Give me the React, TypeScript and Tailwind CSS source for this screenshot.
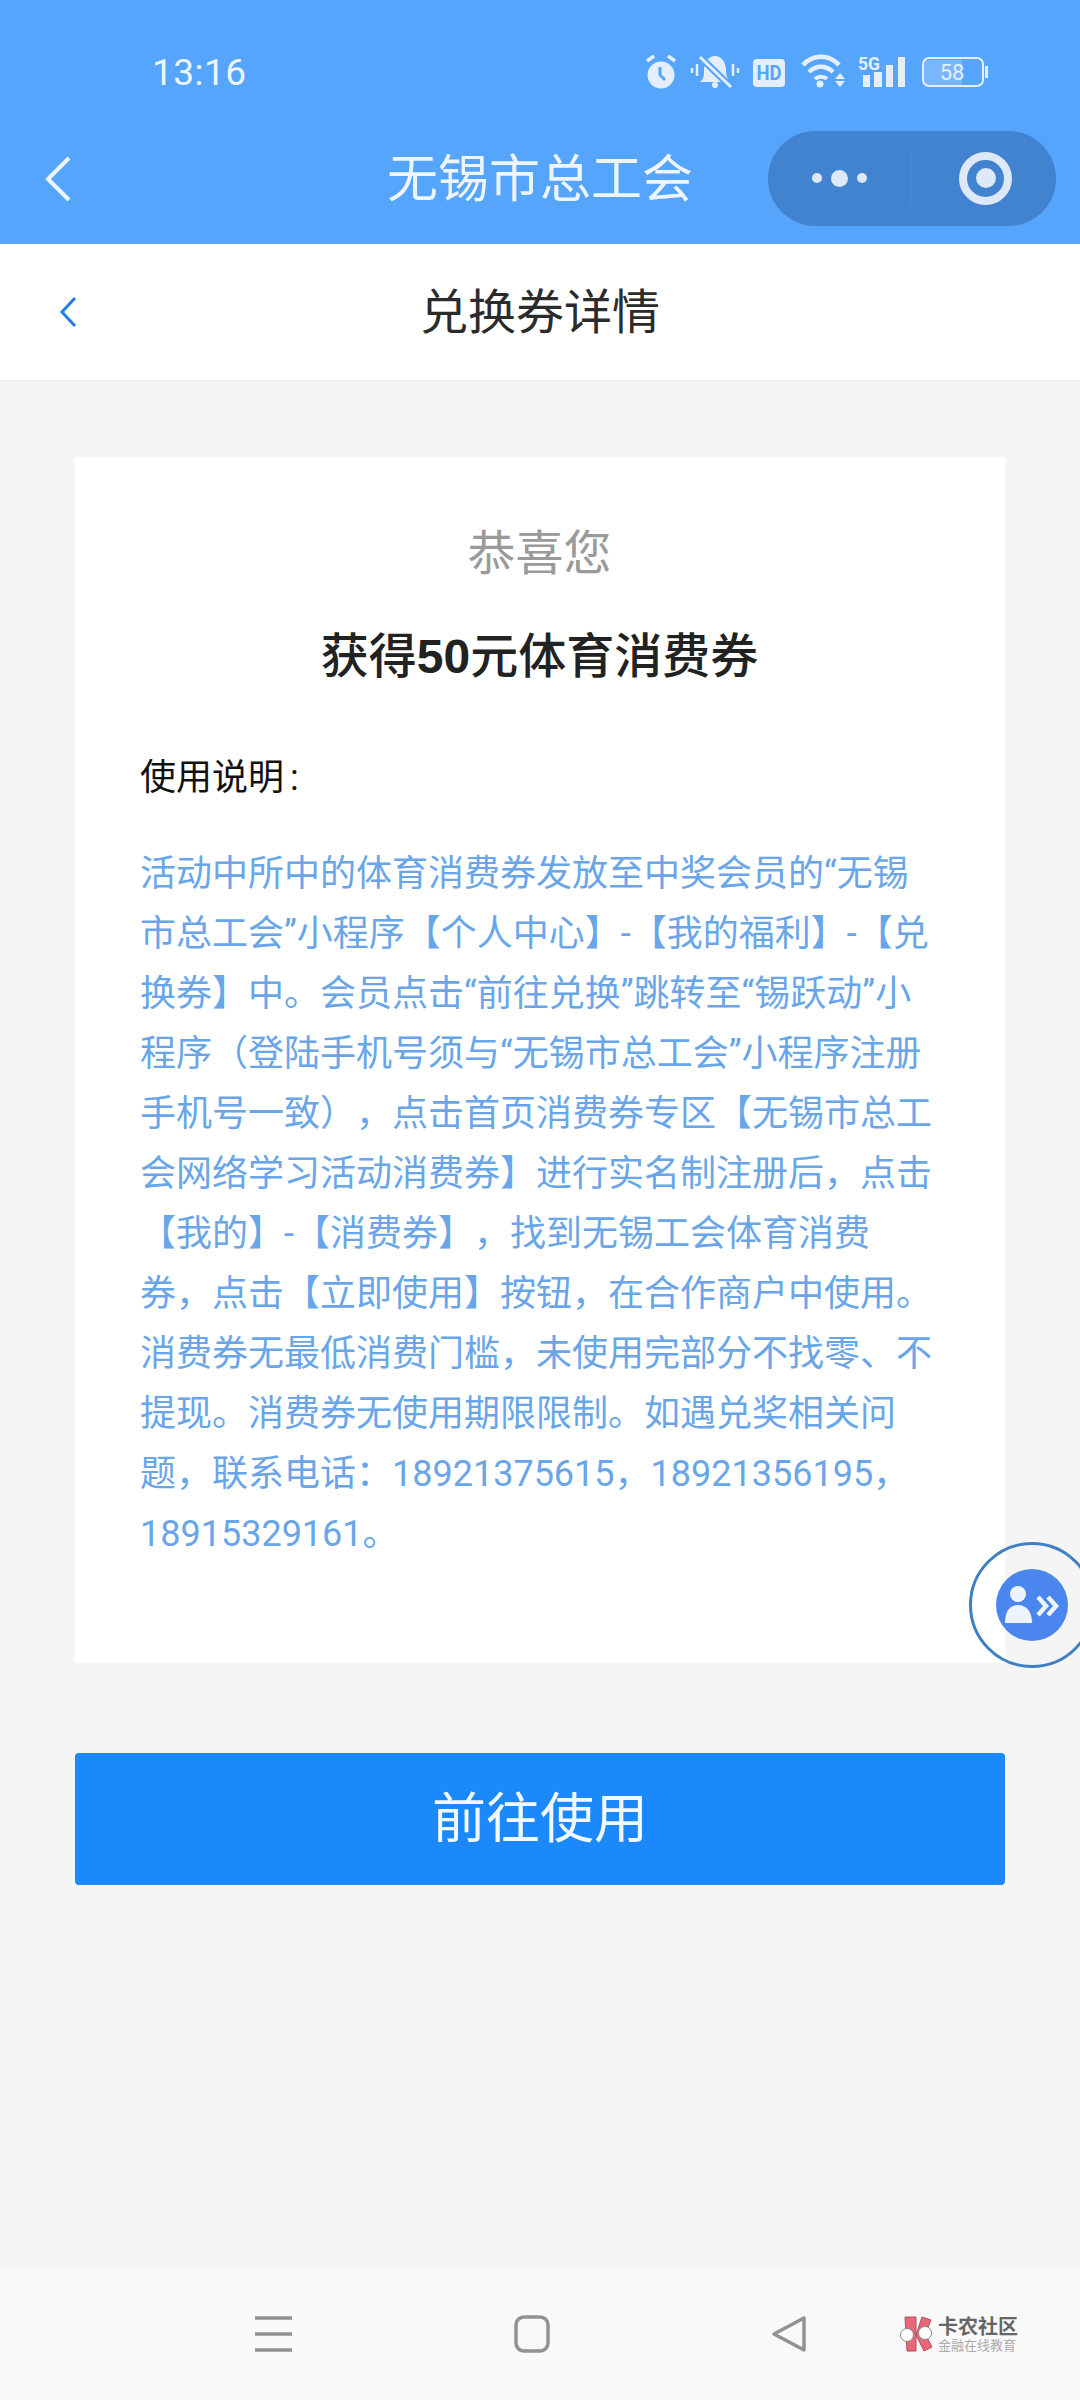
import React from "react";

const FONT = 'Roboto, "Noto Sans CJK SC", sans-serif';

const lines = [
  "活动中所中的体育消费券发放至中奖会员的“无锡",
  "市总工会”小程序【个人中心】-【我的福利】-【兑",
  "换券】中。会员点击“前往兑换”跳转至“锡跃动”小",
  "程序（登陆手机号须与“无锡市总工会”小程序注册",
  "手机号一致），点击首页消费券专区【无锡市总工",
  "会网络学习活动消费券】进行实名制注册后，点击",
  "【我的】-【消费券】，找到无锡工会体育消费",
  "券，点击【立即使用】按钮，在合作商户中使用。",
  "消费券无最低消费门槛，未使用完部分不找零、不",
  "提现。消费券无使用期限限制。如遇兑奖相关问",
  "题，联系电话：18921375615，18921356195，",
  "18915329161。",
];

function StatusIcons() {
  return (
    <svg width="345" height="40" viewBox="0 0 345 40" fill="none" className="block">
      {/* alarm */}
      <circle cx="16" cy="23" r="13.5" fill="#e4effb" />
      <path d="M15 15v8l5 5" stroke="#55a5fd" strokeWidth="3" fill="none" />
      <path d="M2 9l7-5M30 9l-7-5" stroke="#e4effb" strokeWidth="3.5" />
      {/* muted bell */}
      <path d="M55 30c4-3 4-7 4-12 0-8 5-14 11-14s11 6 11 14c0 5 1 9 4 12z" fill="#e4effb" />
      <circle cx="70" cy="33" r="3" fill="#e4effb" />
      <path d="M55 5l31 30" stroke="#55a5fd" strokeWidth="7" />
      <path d="M55 5l31 30" stroke="#e4effb" strokeWidth="3" />
      <path d="M47 16v5M52 12v12M88 12v12M93 16v5" stroke="#e4effb" strokeWidth="2.5" />
      {/* HD */}
      <rect x="108" y="7" width="32" height="28" rx="4" fill="#e4effb" />
      <text x="124" y="28" textAnchor="middle" fontFamily="Roboto, sans-serif" fontWeight="700" fontSize="20" fill="#55a5fd" textLength="25" lengthAdjust="spacingAndGlyphs">HD</text>
      {/* wifi */}
      <path d="M158 13c10-11 26-11 36 0" stroke="#e4effb" strokeWidth="4.5" fill="none" />
      <path d="M164 20c7-7 17-7 24 0" stroke="#e4effb" strokeWidth="4.5" fill="none" />
      <path d="M170 27c3-3 9-3 12 0" stroke="#e4effb" strokeWidth="4" fill="none" />
      <circle cx="175" cy="32" r="3.5" fill="#e4effb" />
      <path d="M190 27l5-6 5 6zM190 29h10l-5 6z" fill="#e4effb" />
      {/* 5G */}
      <text x="213" y="18" fontFamily="Roboto, sans-serif" fontWeight="700" fontSize="19" fill="#e4effb" textLength="22" lengthAdjust="spacingAndGlyphs">5G</text>
      <rect x="218" y="23" width="7" height="12" fill="#e4effb" />
      <rect x="229" y="20" width="8" height="15" fill="#e4effb" />
      <rect x="241" y="13" width="7" height="22" fill="#e4effb" />
      <rect x="253" y="5" width="7" height="30" fill="#e4effb" />
      {/* battery */}
      <path d="M281 8h36v25h-36a3 3 0 0 1-3-3v-19a3 3 0 0 1 3-3z" fill="#7ab6fb" />
      <rect x="278" y="6" width="60" height="28" rx="6" stroke="#e4effb" strokeWidth="2" fill="none" />
      <rect x="340" y="14" width="3" height="12" fill="#e4effb" />
      <text x="307" y="28" textAnchor="middle" fontFamily="Roboto, sans-serif" fontSize="22" fill="#e4effb">58</text>
    </svg>
  );
}

function Logo() {
  return (
    <div className="flex items-center gap-[5px]">
      <svg width="34" height="36" viewBox="0 0 34 36" fill="none">
        <path d="M6 1h11v34H8zM23 1l9 3-6 14 7 13-8 4-8-16z" fill="#e8687a" stroke="#a8505c" strokeWidth="1" />
        <circle cx="8" cy="19" r="6.5" fill="#fff" stroke="#888" strokeWidth="1" />
        <circle cx="26" cy="17" r="6.5" fill="#fff" stroke="#888" strokeWidth="1" />
      </svg>
      <div className="flex flex-col items-start" style={{ fontFamily: FONT }}>
        <span className="text-[20px] leading-[22px] font-bold text-[#666]">卡农社区</span>
        <span className="text-[13px] leading-[15px] text-[#aaa]">金融在线教育</span>
      </div>
    </div>
  );
}

export default function App() {
  return (
    <div className="w-[1080px] h-[2400px] flex flex-col bg-[#f5f5f5] relative overflow-hidden [text-spacing-trim:space-all]" style={{ fontFamily: FONT }}>
      {/* Blue top */}
      <div className="h-[244px] shrink-0 bg-[#55a5fd] flex flex-col">
        <div className="h-[130px] flex items-center justify-between pl-[152px] pr-[90px] pt-[14px]">
          <span className="text-[37px] text-[#eef5fe] leading-none tracking-[0.5px]">13:16</span>
          <StatusIcons />
        </div>
        <div className="flex-1 flex items-center justify-between pl-[44px] pr-[24px] relative">
          <svg width="28" height="48" viewBox="0 0 28 48" fill="none" className="mb-[16px]">
            <path d="M25 3L4 24l21 21" stroke="#eef5fe" strokeWidth="4" />
          </svg>
          <span className="absolute left-0 right-0 top-[15px] text-center text-[51px] leading-[70px] text-[#eef5fe]">无锡市总工会</span>
          <div className="w-[288px] h-[95px] mb-[18px] rounded-[48px] bg-[#4283d0] flex items-center">
            <div className="w-[142px] flex justify-center items-center gap-[9px]">
              <span className="w-[10px] h-[10px] rounded-full bg-[#dde8f8]" />
              <span className="w-[17px] h-[17px] rounded-full bg-[#dde8f8]" />
              <span className="w-[10px] h-[10px] rounded-full bg-[#dde8f8]" />
            </div>
            <div className="w-px h-[56px] bg-[#4d8dd8]" />
            <div className="flex-1 flex justify-center pl-[4px]">
              <div className="w-[53px] h-[53px] rounded-full border-[8px] border-[#dde8f8] flex items-center justify-center">
                <span className="w-[20px] h-[20px] rounded-full bg-[#dde8f8]" />
              </div>
            </div>
          </div>
        </div>
      </div>

      {/* White header */}
      <div className="h-[137px] shrink-0 bg-white border-b border-[#ececec] flex items-center relative pl-[58px]">
        <svg width="20" height="32" viewBox="0 0 20 32" fill="none">
          <path d="M17 2L4 16l13 14" stroke="#1f7fe0" strokeWidth="3" />
        </svg>
        <span className="absolute left-0 right-0 top-[37px] text-center text-[48px] leading-[64px] text-[#2b2b2b]">兑换券详情</span>
      </div>

      {/* Main */}
      <div className="flex-1 px-[75px] pt-[76px]">
        <div className="h-[1206px] bg-white pl-[65px] pr-[66px] pt-[65px]">
          <div className="text-center text-[48px] leading-[64px] text-[#9a9a9a]">恭喜您</div>
          <div className="text-center text-[48px] leading-[64px] mt-[39px] font-medium text-[#222]">
            获得<span className="font-bold" style={{ fontFamily: '"Liberation Sans", sans-serif' }}>50</span>元体育消费券
          </div>
          <div className="text-[36px] leading-[50px] mt-[64px] text-[#111]">
            使用说明<span className="ml-[6px]">:</span>
          </div>
          <div className="text-[36px] leading-[60px] mt-[41px] text-[#69a6e9] whitespace-nowrap">
            {lines.map((l) => (
              <div key={l} className="h-[60px]">{l}</div>
            ))}
          </div>
        </div>
        <div className="h-[132px] mt-[90px] bg-[#1b89fb] rounded-[4px] flex items-center justify-center text-[54px] text-[#f2f8ff]">
          前往使用
        </div>
      </div>

      {/* Nav */}
      <div className="h-[132px] shrink-0 bg-[#f9f9f9] relative flex items-center pl-[255px]">
        <svg width="38" height="38" viewBox="0 0 38 38" fill="none" className="mr-[221px]">
          <path d="M0 3h37M0 19h37M0 35h37" stroke="#929292" strokeWidth="3.5" />
        </svg>
        <svg width="36" height="38" viewBox="0 0 36 38" fill="none" className="mr-[221px]">
          <rect x="2" y="2" width="32" height="34" rx="8" stroke="#929292" strokeWidth="3.5" />
        </svg>
        <svg width="36" height="38" viewBox="0 0 36 38" fill="none" className="mr-[92px]">
          <path d="M33 3L3 19l30 16z" stroke="#929292" strokeWidth="3.5" strokeLinejoin="round" />
        </svg>
        <Logo />
      </div>

      {/* Floating button */}
      <div className="absolute left-[969px] top-[1542px] w-[126px] h-[126px] rounded-full border-[3px] border-[#3f7fc4] flex items-center justify-center">
        <div className="w-[72px] h-[72px] rounded-full bg-[#4a86ee]">
          <svg width="72" height="72" viewBox="0 0 72 72" fill="none">
            <circle cx="22" cy="25" r="8" fill="#eef4fe" />
            <path d="M9 54c0-12 5-18 13-18s14 6 14 18z" fill="#eef4fe" />
            <path d="M42 28l8 9-8 9M52 28l8 9-8 9" stroke="#eef4fe" strokeWidth="4.5" />
          </svg>
        </div>
      </div>
    </div>
  );
}
